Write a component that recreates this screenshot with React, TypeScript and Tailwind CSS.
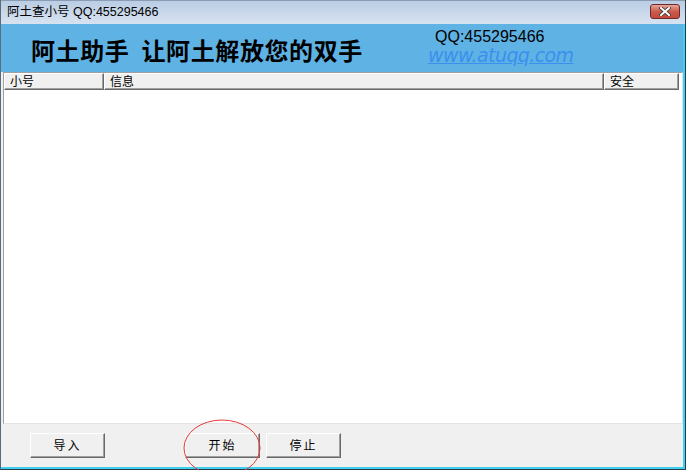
import React from 'react';

const cjk = { fontFamily: '"Liberation Sans", "Noto Sans CJK SC", sans-serif' };

const Btn: React.FC<{ label: string; className?: string }> = ({ label, className }) => (
  <button
    className={`w-[75px] h-[25px] bg-[#f0f0f0] border border-t-white border-l-white border-r-[#696969] border-b-[#696969] shadow-[inset_-1px_-1px_0_#a0a0a0] text-[12px] text-black flex items-center justify-center tracking-[2px] ${className ?? ''}`}
    style={cjk}
  >
    {label}
  </button>
);

const Col: React.FC<{ label: string; w: string }> = ({ label, w }) => (
  <div
    className={`${w} h-full shrink-0 bg-[#f0f0f0] border border-t-white border-l-white border-r-[#696969] border-b-[#696969] shadow-[inset_-1px_-1px_0_#a0a0a0] pl-[5px] flex items-center text-[12px] text-black leading-none`}
  >
    {label}
  </div>
);

export default function App() {
  return (
    <div className="relative w-[686px] h-[470px] overflow-hidden bg-[#f0f0f0] select-none" style={cjk}>
      <div className="flex flex-col w-full h-full border-l border-l-[#5a6b80] border-r border-r-[#2a3a4a] border-b border-b-[#2a3a4a]">
        {/* title bar */}
        <div className="h-[24px] shrink-0 flex items-center justify-between bg-gradient-to-b from-[#bacde4] to-[#d8e3f0] border-t border-t-[#8a9cb3] pl-[6px] pr-[5px]">
          <span className="text-[12.5px] text-black leading-none">阿土查小号 QQ:455295466</span>
          <div className="w-[30px] h-[15px] -mt-[3px] rounded-[3px] border border-[#6e2a2a] bg-gradient-to-b from-[#e4a598] via-[#cb5a4c] to-[#c44a3c] flex items-center justify-center">
            <svg width="12" height="9" viewBox="0 0 12 9">
              <path d="M2 1 L10 8 M10 1 L2 8" stroke="#3a3a3a" strokeWidth="3.6" strokeLinecap="square" />
              <path d="M2 1 L10 8 M10 1 L2 8" stroke="#ffffff" strokeWidth="2" strokeLinecap="square" />
            </svg>
          </div>
        </div>

        <div className="flex-1 flex flex-col border-r-2 border-r-[#3fd0f0] border-b-2 border-b-[#3fd0f0]">
          {/* banner */}
          <div className="h-[48px] shrink-0 bg-[#5fb2e4] flex items-center">
            <div
              className="w-[427px] shrink-0 pl-[30px] text-[24px] font-bold text-black leading-none mt-[3px] tracking-[0.6px]"
              style={{ fontFamily: '"Noto Sans CJK SC", sans-serif' }}
            >
              阿土助手&nbsp;&nbsp;让阿土解放您的双手
            </div>
            <div className="flex flex-col -mt-[3px]">
              <span className="pl-[7px] text-[16px] text-black leading-[17px]" style={{ fontFamily: '"Liberation Sans", sans-serif' }}>
                QQ:455295466
              </span>
              <span
                className="text-[19px] italic underline text-[#3a90ee] leading-[21px]"
                style={{ fontFamily: '"DejaVu Sans", sans-serif', letterSpacing: '-0.6px' }}
              >
                www.atuqq.com
              </span>
            </div>
          </div>

          {/* list view */}
          <div className="h-[352px] shrink-0 ml-[2px] flex flex-col bg-white border border-t-[#a0a0a0] border-l-[#a0a0a0] border-r-[#e3e3e3] border-b-[#e3e3e3]">
            <div className="h-[17px] shrink-0 flex">
              <Col label="小号" w="w-[100px]" />
              <Col label="信息" w="w-[500px]" />
              <Col label="安全" w="w-[75px]" />
            </div>
            <div className="flex-1 bg-white" />
          </div>

          {/* bottom buttons */}
          <div className="flex-1 flex items-start pt-[9px] pl-[29px]">
            <Btn label="导入" />
            <Btn label="开始" className="ml-[80px]" />
            <Btn label="停止" className="ml-[6px]" />
          </div>
        </div>
      </div>

      {/* red annotation ellipse */}
      <svg className="absolute left-[182px] top-[418px] pointer-events-none" width="80" height="62" viewBox="0 0 80 62">
        <ellipse cx="40" cy="30" rx="38" ry="28" fill="none" stroke="#e83a3a" strokeWidth="1" />
      </svg>
    </div>
  );
}
